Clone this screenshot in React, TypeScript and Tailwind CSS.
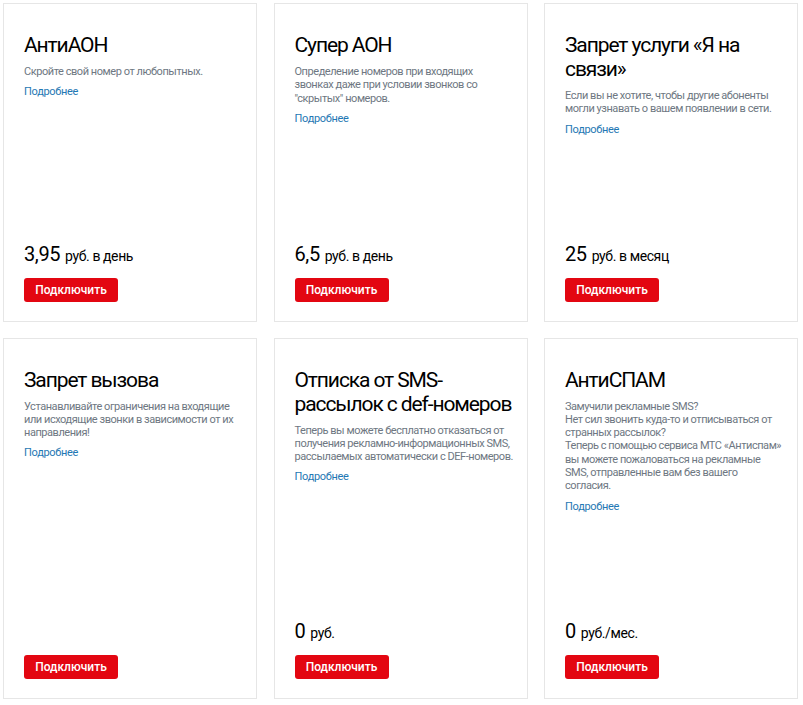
const cards = [
  {
    title: ["АнтиАОН"],
    text: ["Скройте свой номер от любопытных."],
    price: "3,95",
    unit: "руб. в день",
  },
  {
    title: ["Супер АОН"],
    text: [
      "Определение номеров при входящих",
      "звонках даже при условии звонков со",
      "\"скрытых\" номеров.",
    ],
    price: "6,5",
    unit: "руб. в день",
  },
  {
    title: ["Запрет услуги «Я на", "связи»"],
    text: [
      "Если вы не хотите, чтобы другие абоненты",
      "могли узнавать о вашем появлении в сети.",
    ],
    price: "25",
    unit: "руб. в месяц",
  },
  {
    title: ["Запрет вызова"],
    text: [
      "Устанавливайте ограничения на входящие",
      "или исходящие звонки в зависимости от их",
      "направления!",
    ],
  },
  {
    title: ["Отписка от SMS-", "рассылок с def-номеров"],
    text: [
      "Теперь вы можете бесплатно отказаться от",
      "получения рекламно-информационных SMS,",
      "рассылаемых автоматически с DEF-номеров.",
    ],
    price: "0",
    unit: "руб.",
  },
  {
    title: ["АнтиСПАМ"],
    text: [
      "Замучили рекламные SMS?",
      "Нет сил звонить куда-то и отписываться от",
      "странных рассылок?",
      "Теперь с помощью сервиса МТС «Антиспам»",
      "вы можете пожаловаться на рекламные",
      "SMS, отправленные вам без вашего",
      "согласия.",
    ],
    price: "0",
    unit: "руб./мес.",
  },
];

type CardProps = {
  title: string[];
  text: string[];
  price?: string;
  unit?: string;
};

const ServiceCard = ({ title, text, price, unit }: CardProps) => {
  return (
    <div className="flex flex-col border border-[#e6e6e6] bg-white px-5 pt-[29px] pb-[19px]">
      <div className="pb-[106px]">
        <h3 className="whitespace-nowrap text-[21px] leading-[24px] tracking-[-1.1px] text-black">
          {title.map((line, i) => (
            <div key={i}>{line}</div>
          ))}
        </h3>
        <p className="mt-[8px] whitespace-nowrap text-[11px] leading-[13.3px] tracking-[-0.45px] text-[#6e7782]">
          {text.map((line, i) => (
            <span key={i} className="block">
              {line}
            </span>
          ))}
        </p>
        <a href="#" className="mt-[7px] block text-[11px] leading-[13px] tracking-[-0.3px] text-[#1f78b4]">
          Подробнее
        </a>
      </div>
      <div className="mt-auto">
        {price && (
          <div className="mb-[9px] flex items-baseline gap-[5px] leading-[24px] text-black">
            <span className="text-[20px] tracking-[-0.4px]">{price}</span>
            <span className="text-[14px] tracking-[-0.4px]">{unit}</span>
          </div>
        )}
        <button className="h-[24px] w-[94px] rounded-[3px] bg-[#e30611] text-[12px] font-medium text-white">
          Подключить
        </button>
      </div>
    </div>
  );
};

export default function App() {
  return (
    <div className="min-h-screen bg-white font-['Roboto',sans-serif]">
      <div className="grid grid-cols-[254px_254px_254px] gap-x-[16.5px] gap-y-[16px] px-[3px] pt-[3px]">
        {cards.map((card, i) => (
          <ServiceCard key={i} {...card} />
        ))}
      </div>
    </div>
  );
}
